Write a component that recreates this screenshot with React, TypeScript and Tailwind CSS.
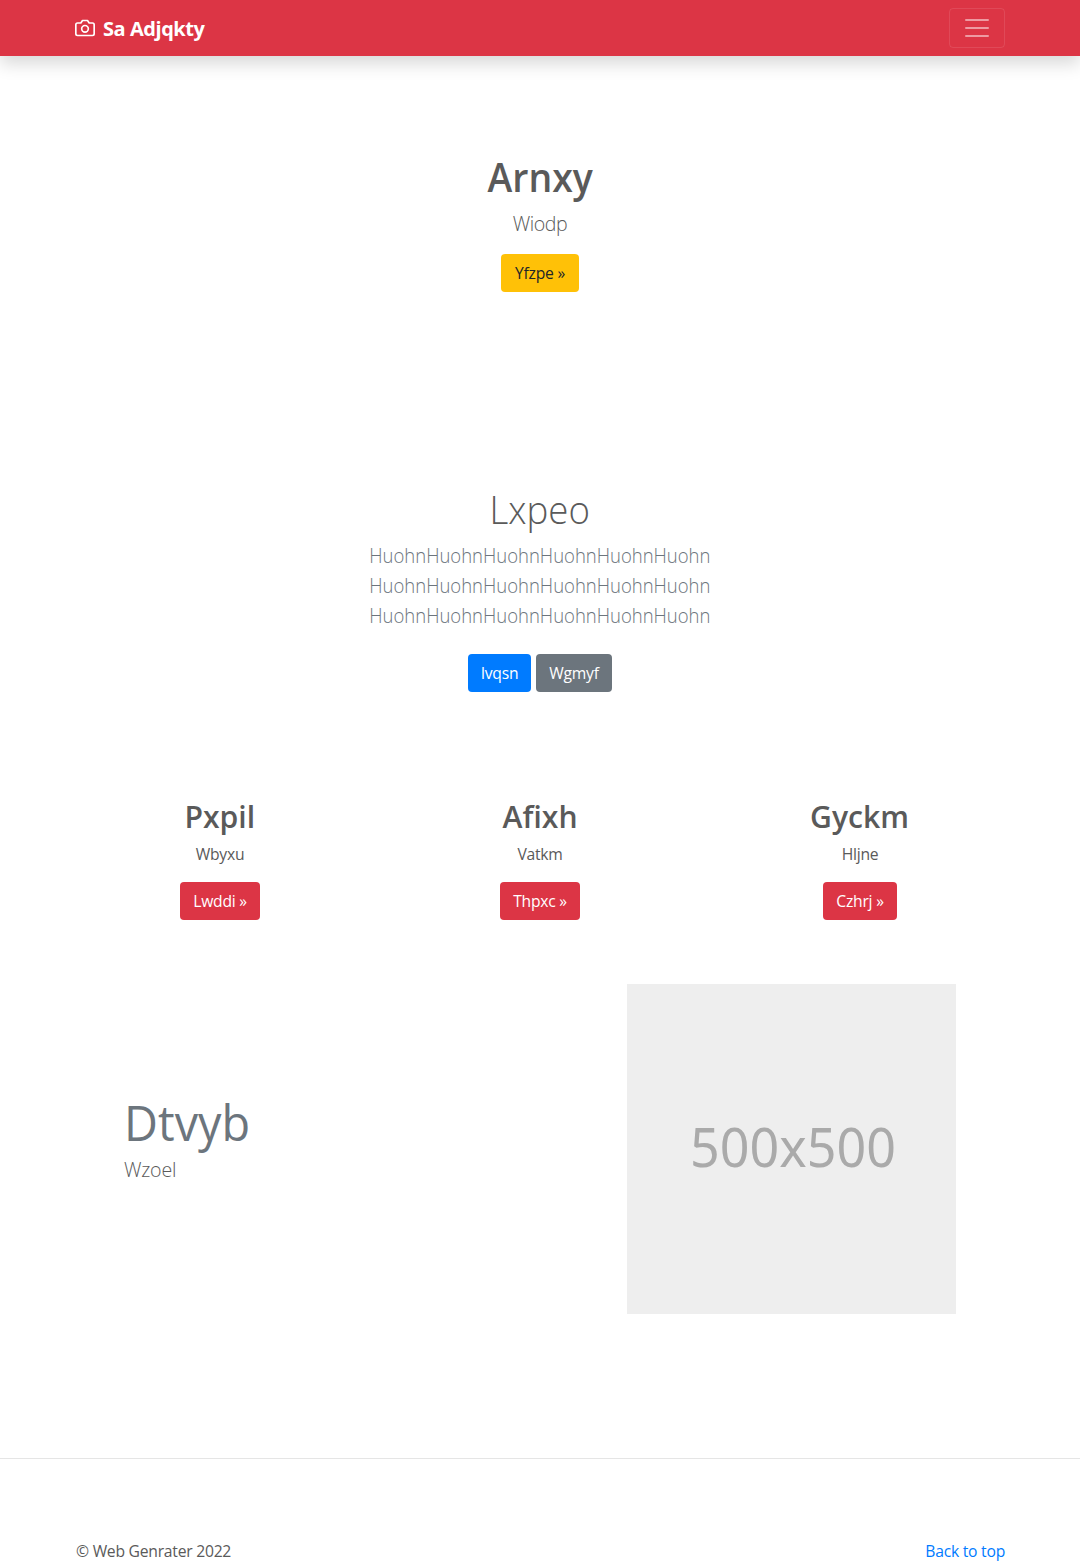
const features = [
  { title: 'Pxpil', text: 'Wbyxu', action: 'Lwddi »', width: 'w-[80px]' },
  { title: 'Afixh', text: 'Vatkm', action: 'Thpxc »', width: 'w-[80px]' },
  { title: 'Gyckm', text: 'Hljne', action: 'Czhrj »', width: 'w-[74px]' },
];

const button = 'flex h-[38px] items-center justify-center whitespace-nowrap rounded-[4px] text-[15.7px] leading-6 tracking-[-0.25px]';

function CameraIcon() {
  return (
    <svg width="20" height="20" viewBox="0 0 24 24" fill="none" stroke="currentColor" strokeWidth="2" strokeLinecap="round" strokeLinejoin="round" className="mr-2">
      <path d="M23 19a2 2 0 0 1-2 2H3a2 2 0 0 1-2-2V8a2 2 0 0 1 2-2h4l2-3h6l2 3h4a2 2 0 0 1 2 2z" />
      <circle cx="12" cy="13" r="4" />
    </svg>
  );
}

function Header() {
  return (
    <header className="h-14 shrink-0 bg-[#dc3545] shadow-[0_8px_16px_rgba(0,0,0,0.15)]">
      <div className="mx-auto flex h-full w-[930px] items-center justify-between">
        <a href="#" className="flex items-center text-white">
          <CameraIcon />
          <strong className="pt-px text-[20px] leading-[30px] font-bold tracking-[-0.45px]">Sa Adjqkty</strong>
        </a>
        <button aria-label="Menu" className="flex h-10 w-14 items-center justify-center rounded-[4px] border border-white/10">
          <svg width="30" height="30" viewBox="0 0 30 30">
            <path stroke="rgba(255,255,255,0.5)" strokeLinecap="round" strokeMiterlimit="10" strokeWidth="2" d="M4 7h22M4 15h22M4 23h22" />
          </svg>
        </button>
      </div>
    </header>
  );
}

export default function App() {
  return (
    <div className="flex h-[1563px] w-[1080px] flex-col overflow-hidden bg-white font-['Open_Sans',sans-serif] text-[15.7px] leading-6 tracking-[-0.25px] text-[#5a5a5a]">
      <Header />
      <main className="shrink-0">
        <section className="flex flex-col items-center pt-[97px]">
          <h1 className="scale-x-[0.955] text-[39.2px] leading-[48px] font-semibold tracking-normal">Arnxy</h1>
          <p className="mt-2 text-[19.6px] leading-[30px] font-light tracking-[-0.4px]">Wiodp</p>
          <a href="#" className={`${button} mt-[15px] w-[78px] bg-[#ffc107] text-[#212529]`}>Yfzpe »</a>
        </section>

        <section className="flex flex-col items-center pt-[193px]">
          <h1 className="scale-x-[0.935] text-[39.2px] leading-[48px] font-light tracking-normal">Lxpeo</h1>
          <p className="mt-2 scale-x-[0.943] text-center text-[19.6px] leading-[30px] font-light tracking-normal text-[#6c757d]">
            HuohnHuohnHuohnHuohnHuohnHuohn<br />
            HuohnHuohnHuohnHuohnHuohnHuohn<br />
            HuohnHuohnHuohnHuohnHuohnHuohn
          </p>
          <div className="mt-[23px] flex gap-[5px]">
            <a href="#" className={`${button} w-[63px] bg-[#007bff] text-white`}>Ivqsn</a>
            <a href="#" className={`${button} w-[76px] bg-[#6c757d] text-white`}>Wgmyf</a>
          </div>
        </section>

        <section className="mx-auto grid w-[960px] grid-cols-3 pt-[105px]">
          {features.map((f) => (
            <div key={f.title} className="flex flex-col items-center">
              <h2 className="scale-x-[0.96] text-[31.4px] leading-[38px] font-semibold tracking-normal">{f.title}</h2>
              <p className="mt-[7px]">{f.text}</p>
              <a href="#" className={`${button} ${f.width} mt-4 bg-[#dc3545] text-white`}>{f.action}</a>
            </div>
          ))}
        </section>

        <section className="flex justify-between pt-[64px] pr-[124px] pl-[124px]">
          <div className="pt-[108px]">
            <h2 className="origin-left scale-x-[0.955] text-[49px] leading-[60px] tracking-normal text-[#6c757d]">Dtvyb</h2>
            <p className="mt-[3px] text-[19.6px] leading-[30px] font-light tracking-[-0.2px]">Wzoel</p>
          </div>
          <div className="flex h-[330px] w-[329px] items-center justify-center bg-[#eee] pb-[7px] font-['Noto_Sans',sans-serif] text-[55px] tracking-normal text-[#aaa]">
            <span className="translate-x-px scale-x-[0.945]">500x500</span>
          </div>
        </section>
      </main>

      <footer className="mt-[144px] shrink-0 border-t border-black/10 pt-[80px]">
        <div className="mx-auto flex w-[930px] justify-between">
          <p className="pl-px">© Web Genrater 2022</p>
          <a href="#" className="text-[#007bff]">Back to top</a>
        </div>
      </footer>
    </div>
  );
}
